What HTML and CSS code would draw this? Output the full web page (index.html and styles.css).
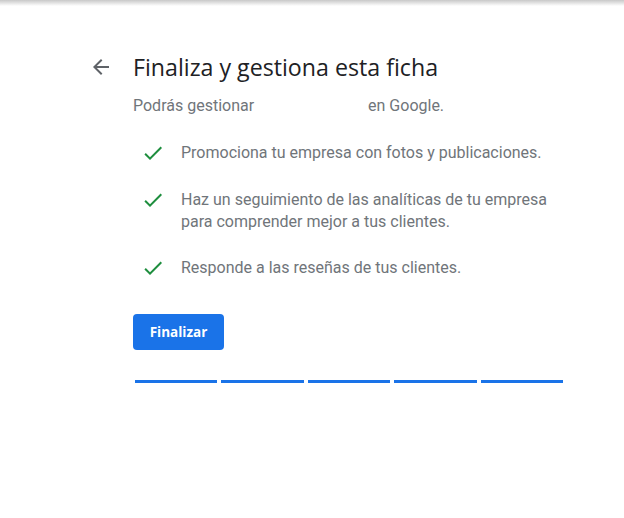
FILE: index.html
```html
<!DOCTYPE html>
<html lang="es">
<head>
<meta charset="utf-8">
<link rel="stylesheet" href="styles.css">
</head>
<body>
<div class="topshadow"></div>
<main class="page">
  <div class="header">
    <button class="back" aria-label="Atrás">
      <svg width="24" height="24" viewBox="0 0 24 24"><path d="M20 11H7.83l5.59-5.59L12 4l-8 8 8 8 1.41-1.41L7.83 13H20v-2z" fill="#5f6368"/></svg>
    </button>
    <h1 class="title">Finaliza y gestiona esta ficha</h1>
  </div>
  <div class="content">
    <p class="sub">Podrás gestionar <span class="redacted"></span> en Google.</p>
    <ul class="list">
      <li><svg class="check" width="24" height="24" viewBox="0 0 24 24"><path d="M9 16.17L4.83 12l-1.42 1.41L9 19 21 7l-1.41-1.41z" fill="#1e8e3e"/></svg><span>Promociona tu empresa con fotos y publicaciones.</span></li>
      <li><svg class="check" width="24" height="24" viewBox="0 0 24 24"><path d="M9 16.17L4.83 12l-1.42 1.41L9 19 21 7l-1.41-1.41z" fill="#1e8e3e"/></svg><span>Haz un seguimiento de las analíticas de tu empresa para comprender mejor a tus clientes.</span></li>
      <li><svg class="check" width="24" height="24" viewBox="0 0 24 24"><path d="M9 16.17L4.83 12l-1.42 1.41L9 19 21 7l-1.41-1.41z" fill="#1e8e3e"/></svg><span>Responde a las reseñas de tus clientes.</span></li>
    </ul>
    <button class="primary">Finalizar</button>
    <div class="progress">
      <span></span><span></span><span></span><span></span><span></span>
    </div>
  </div>
</main>
</body>
</html>
```

FILE: styles.css
```css
html, body {
  margin: 0;
  padding: 0;
  background: #fff;
}
body {
  font-family: Roboto, "Liberation Sans", Arial, sans-serif;
  color: #70757a;
}
.topshadow {
  height: 6px;
  background: linear-gradient(#c8c8c8, #fff);
}
.page {
  padding-top: 47px;
}
.header {
  display: flex;
  align-items: center;
  padding-left: 89px;
}
.back {
  width: 24px;
  height: 24px;
  padding: 0;
  border: 0;
  background: none;
  margin-right: 20px;
  display: flex;
}
.title {
  margin: 0;
  font-family: "Open Sans", Roboto, sans-serif;
  font-weight: 400;
  font-size: 23.2px;
  line-height: 28px;
  color: #202124;
}
.content {
  padding-left: 133px;
  width: 450px;
}
.sub {
  margin: 14px 0 0;
  font-size: 16px;
  line-height: 22px;
}
.redacted {
  display: inline-block;
  width: 106px;
}
.list {
  list-style: none;
  margin: 25px 0 0;
  padding: 0;
}
.list li {
  display: flex;
  align-items: flex-start;
  margin-bottom: 24px;
  font-size: 16px;
  line-height: 22px;
  width: 420px;
}
.check {
  flex: none;
  margin: -1px 16px 0 8px;
}
.primary {
  display: block;
  margin-top: 34px;
  width: 91px;
  height: 36px;
  border: 0;
  border-radius: 4px;
  background: #1a73e8;
  color: #fff;
  font-family: "Open Sans", Roboto, sans-serif;
  font-weight: 700;
  font-size: 13.5px;
  padding: 0;
}
.progress {
  display: flex;
  gap: 4px;
  margin-top: 30px;
  margin-left: 2px;
  width: 428px;
}
.progress span {
  flex: 1;
  height: 3px;
  background: #1a73e8;
}
```
